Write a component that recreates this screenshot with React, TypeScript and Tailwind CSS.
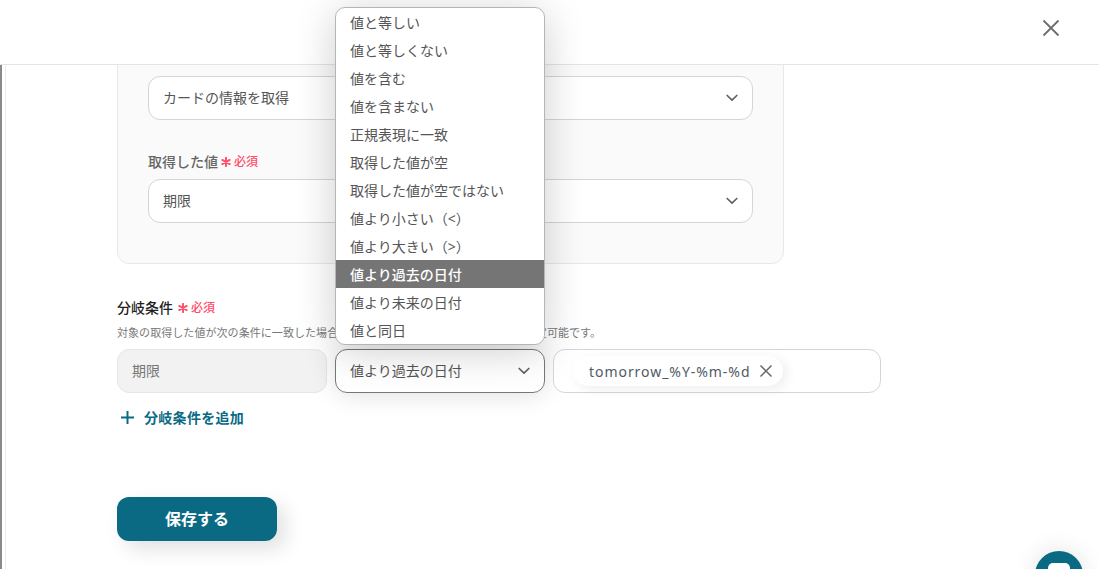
import React from "react";

const FONT = "font-['Noto_Sans','Noto_Sans_CJK_JP',sans-serif]";
const options = ["値と等しい","値と等しくない","値を含む","値を含まない","正規表現に一致","取得した値が空","取得した値が空ではない","値より小さい（<）","値より大きい（>）","値より過去の日付","値より未来の日付","値と同日"];

function Chevron() {
  return (
    <svg width="12" height="8" viewBox="0 0 12 8" fill="none" className="shrink-0">
      <path d="M1.2 1.5 6 6.2l4.8-4.7" stroke="#5f6368" strokeWidth="1.7" strokeLinecap="round" strokeLinejoin="round" />
    </svg>
  );
}

function Required({ className }: { className: string }) {
  return (
    <span className={`${className} inline-flex items-center gap-[3px] pt-[2px] text-[12px] font-medium text-[#ff4d6a]`}>
      <svg width="10" height="10" viewBox="0 0 10 10" stroke="#ff4d6a" strokeWidth="1.9" strokeLinecap="round">
        <path d="M5 .8v8.4M1.3 2.9l7.4 4.2M8.7 2.9 1.3 7.1" />
      </svg>
      必須
    </span>
  );
}

function SelectBox({ text }: { text: string }) {
  return (
    <div className="flex h-[44px] items-center justify-between rounded-[12px] border border-[#d3d5de] bg-white pl-[14px] pr-[14px] text-[14px] text-[#555]">
      <span className="pb-[2px]">{text}</span>
      <Chevron />
    </div>
  );
}

export default function App() {
  return (
    <div className={`${FONT} relative flex h-[569px] w-[1099px] flex-col overflow-hidden bg-white`}>
      <header className="relative z-10 flex h-[65px] shrink-0 items-start justify-end border-b border-[#e4e4e4] bg-white pr-[38px] pt-[18px]">
        <svg width="20" height="20" viewBox="0 0 20 20" stroke="#6f6f6f" strokeWidth="1.9" fill="none">
          <path d="M2.5 2.5l15 15M17.5 2.5l-15 15" />
        </svg>
      </header>

      <main className="flex min-h-0 flex-1">
        <div className="w-[2px] shrink-0 bg-[#8a8a8a]" />
        <div className="ml-[3px] w-[1px] shrink-0 bg-[#ececec]" />
        <div className="min-w-0 flex-1 pl-[111px]">
          <section className="-mt-[40px] h-[239px] w-[667px] rounded-[12px] border border-[#e8e8ec] bg-[#fafafa] px-[30px] pt-[50px]">
            <SelectBox text="カードの情報を取得" />
            <div className="mt-[27px] flex h-[28px] items-center text-[14px] font-medium text-[#666]">
              取得した値<Required className="ml-[3px]" />
            </div>
            <div className="mt-[4px]">
              <SelectBox text="期限" />
            </div>
          </section>

          <div className="mt-[33px] flex h-[20px] items-center text-[14px] font-medium text-[#222]">
            分岐条件<Required className="ml-[5px]" />
          </div>
          <p className="mt-[7px] h-[18px] text-[11px] leading-[18px] tracking-[0.06px] text-[#777]">
            対象の取得した値が次の条件に一致した場合に、分岐先へ進みます。条件は複数に設定可能です。
          </p>

          <div className="mt-[7px] flex h-[44px] gap-[8px]">
            <div className="flex w-[210px] items-center rounded-[12px] border border-[#e6e6e6] bg-[#f2f2f2] pb-[2px] pl-[14px] text-[14px] text-[#777]">
              期限
            </div>
            <div className="flex w-[210px] items-center justify-between rounded-[12px] border border-[#777] bg-white pl-[14px] pr-[14px] text-[14px] text-[#555] shadow-[0_2px_24px_rgba(0,0,0,0.12)]">
              <span className="pb-[2px]">値より過去の日付</span>
              <Chevron />
            </div>
            <div className="flex w-[328px] items-center rounded-[12px] border border-[#d3d5de] bg-white pl-[19px]">
              <div className="flex h-[30px] items-center gap-[9px] rounded-full bg-white pl-[16px] pr-[10px] text-[14px] tracking-[0.95px] text-[#4e5a66] shadow-[4px_3px_12px_rgba(0,0,0,0.07)]">
                <span>tomorrow_%Y-%m-%d</span>
                <svg width="14" height="14" viewBox="0 0 14 14" stroke="#666" strokeWidth="1.5" fill="none">
                  <path d="M1.5 1.5l11 11M12.5 1.5l-11 11" />
                </svg>
              </div>
            </div>
          </div>

          <div className="mt-[14px] ml-[4px] flex h-[20px] items-center gap-[10px] text-[14px] font-bold tracking-[0.3px] text-[#0b6a83]">
            <svg width="13" height="13" viewBox="0 0 13 13" stroke="#0b6a83" strokeWidth="2" fill="none" className="mt-[1px]">
              <path d="M6.5 0v13M0 6.5h13" />
            </svg>
            分岐条件を追加
          </div>

          <button className="mt-[70px] flex h-[44px] w-[160px] items-center justify-center rounded-[12px] bg-[#0b6a83] text-[16px] font-bold text-white shadow-[8px_8px_20px_rgba(0,0,0,0.12)]">
            保存する
          </button>
        </div>
      </main>

      {/* open listbox */}
      <ul className="absolute z-20 left-[335px] top-[7px] w-[210px] overflow-hidden rounded-[10px] border border-[#b5b5b5] bg-white text-[14px] text-[#555] shadow-[0_6px_40px_rgba(0,0,0,0.2)]">
        {options.map((o) => (
          <li
            key={o}
            className={`flex h-[28px] items-center pl-[14px] ${o === "値より過去の日付" ? "bg-[#757575] font-medium text-white" : ""}`}
          >
            {o}
          </li>
        ))}
      </ul>

      {/* chat launcher */}
      <div className="absolute left-[1035px] top-[551px] flex h-[48px] w-[48px] justify-center rounded-full bg-[#0b6a83] pt-[12px] shadow-[0_0_24px_rgba(0,0,0,0.12)]">
        <div className="h-[24px] w-[22px] rounded-[5px] bg-white" />
      </div>
    </div>
  );
}
